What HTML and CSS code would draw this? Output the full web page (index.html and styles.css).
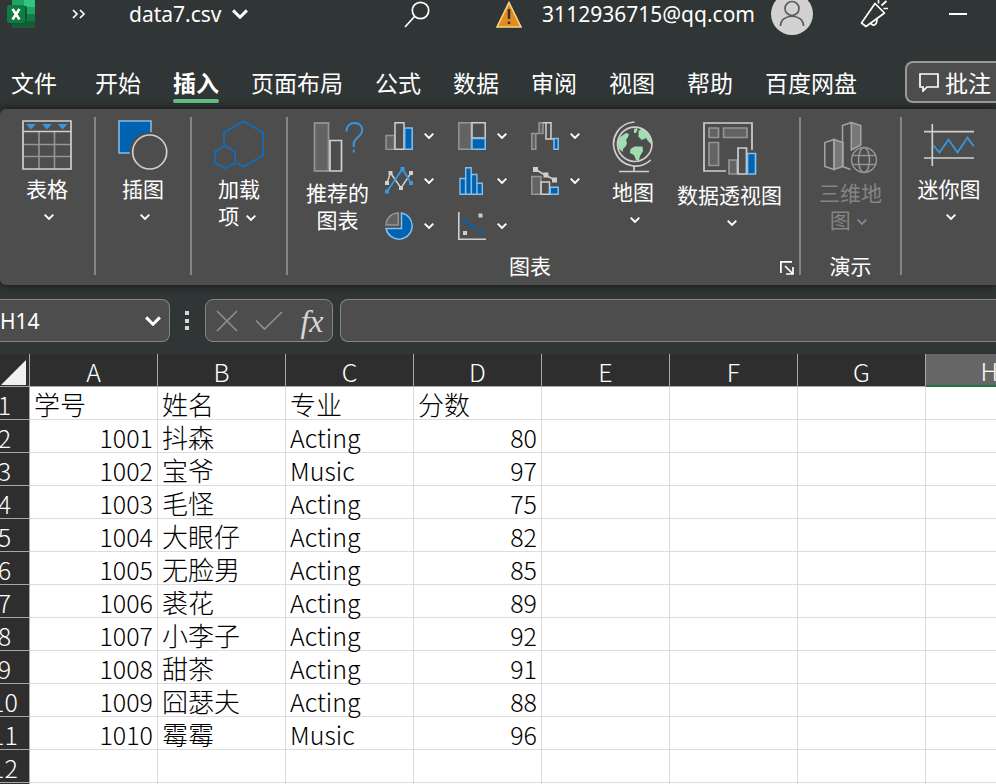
FILE: index.html
```
<!DOCTYPE html>
<html lang="zh-CN">
<head>
    <meta charset="UTF-8">
    <meta name="viewport" content="width=device-width, initial-scale=1.0">
    <title>data7.csv - Excel</title>
    <link rel="stylesheet" href="styles.css">
</head>
<body>
    <svg class="defs" aria-hidden="true">
        <symbol id="chevron" viewBox="0 0 10 6"><path d="M.7.7 5 5 9.3.7" fill="none" stroke="currentColor" stroke-width="1.9"/></symbol>
    </svg>

    <header class="titlebar">
        <svg class="logo" width="28" height="28" viewBox="0 0 28 28">
            <path fill="#21a366" d="M5 0h12v14H5z"/>
            <path fill="#33c481" d="M17 0h11v7H17z"/>
            <path fill="#21a366" d="M17 7h11v7H17z"/>
            <path fill="#107c41" d="M17 14h11v7H17z"/>
            <path fill="#185c37" d="M5 14h12v7h11v6q0 1-1 1H6q-1 0-1-1z"/>
            <rect x="2" y="6" width="18" height="18" rx="2" fill="#0b5a2f"/>
            <rect x="0" y="5" width="18" height="18" rx="2" fill="#107c41"/>
            <path d="M5.500 9l7 10.500M12.500 9l-7 10.500" stroke="#fff" stroke-width="2.600"/>
        </svg>
        <button class="more" aria-label="更多命令">
            <svg width="14" height="10" viewBox="0 0 14 10"><path d="M1 1l4 4-4 4M8 1l4 4-4 4" fill="none" stroke="#fff" stroke-width="1.7"/></svg>
        </button>
        <button class="file-name">data7.csv <svg width="16" height="10"><use href="#chevron"/></svg></button>
        <button class="search" aria-label="搜索">
            <svg width="26" height="27" viewBox="0 0 26 27" fill="none" stroke="#fff" stroke-width="1.7"><circle cx="16.500" cy="9.500" r="8.200"/><path d="M10.500 15.500 1 26"/></svg>
        </button>
        <button class="account">
            <svg width="26" height="27" viewBox="0 0 26 27"><path d="M13 1.500 25 26H1z" fill="#e08c1e" stroke="#f8d48a" stroke-width="1.600"/><path d="M13 8v10M13 20.500v2.500" stroke="#333" stroke-width="2.500"/></svg>
            <span>3112936715@qq.com</span>
            <svg class="avatar" width="42" height="42" viewBox="0 0 42 42"><circle cx="21" cy="21" r="21" fill="#d2d2d2"/><g fill="none" stroke="#5c5c5c" stroke-width="1.700"><circle cx="21" cy="15.500" r="7"/><path d="M9.500 33c0-13 23-13 23 0"/></g></svg>
        </button>
        <button class="feedback" aria-label="反馈">
            <svg width="28" height="28" viewBox="0 0 28 28" fill="none" stroke="#fff" stroke-width="1.700" stroke-linejoin="round"><path d="M15 3.500 24.500 13 6 26.500 1.500 23z"/><path d="M11 23c1 3.500 6 3 6-4"/><path d="M18.500 3.500V0M21.500 5.500 26.500 1M23.500 8.500H28"/></svg>
        </button>
        <button class="minimize" aria-label="最小化">
            <svg width="18" height="2"><path d="M0 1h18" stroke="#fff" stroke-width="2"/></svg>
        </button>
    </header>

    <nav class="tabs">
        <button class="tab tab-file">文件</button>
        <button class="tab">开始</button>
        <button class="tab active">插入</button>
        <button class="tab">页面布局</button>
        <button class="tab">公式</button>
        <button class="tab">数据</button>
        <button class="tab">审阅</button>
        <button class="tab">视图</button>
        <button class="tab">帮助</button>
        <button class="tab">百度网盘</button>
        <button class="comments">
            <svg width="20" height="19" viewBox="0 0 20 19"><path d="M1 1h18v13H8l-4 4v-4H1z" fill="none" stroke="#fff" stroke-width="1.700"/></svg>
            批注
        </button>
    </nav>

    <section class="ribbon">
        <div class="group">
            <button class="big">
                <svg width="50" height="50" viewBox="0 0 50 50" fill="none">
                    <path d="M17 12v37M32.500 12v37M1 24.500h48M1 36.500h48" stroke="#979593" stroke-width="1.600"/>
                    <path d="M1 1h48v48H1zM1 11.500h48" stroke="#d0cfce" stroke-width="1.700"/>
                    <path d="M4 4h10L9 9.500zM20 4h10l-5 5.500zM35.500 4h10l-5 5.500z" fill="#3a96dd"/>
                </svg>
                <span>表格</span>
                <svg class="drop"><use href="#chevron"/></svg>
            </button>
        </div>

        <div class="group">
            <button class="big">
                <svg width="50" height="50" viewBox="0 0 50 50">
                    <rect x="1" y="1" width="32" height="32" fill="#0063b1" stroke="#83beec" stroke-width="1.500"/>
                    <circle cx="31.700" cy="32" r="20" fill="#4d4d4d"/>
                    <circle cx="31.700" cy="32" r="17" fill="none" stroke="#d0cfce" stroke-width="1.700"/>
                </svg>
                <span>插图</span>
                <svg class="drop"><use href="#chevron"/></svg>
            </button>
        </div>

        <div class="group">
            <button class="big">
                <svg width="50" height="50" viewBox="0 0 50 50" fill="none" stroke="#106ebe" stroke-width="1.700">
                    <path d="M10 23.500v-11L29.300 1.300 49 12.500v23L29.300 46.700 23 43"/>
                    <path d="M11 25.700l10.300 6v11L11 48.300.900 42.700v-11z"/>
                </svg>
                <span>加载<br>项 <svg class="drop inline"><use href="#chevron"/></svg></span>
            </button>
        </div>

        <div class="group charts">
            <div class="chart-tools">
                <button class="big">
                    <svg width="50" height="54" viewBox="0 -1 50 54" fill="none">
                        <rect x="1.500" y="2" width="14" height="48" fill="#636363" stroke="#979593" stroke-width="1.700"/>
                        <path d="M17 19.500h11.500V50H17z" stroke="#d0cfce" stroke-width="1.700"/>
                        <path d="M33.500 10.500C33.500 5 37 2 41.500 2s7.700 3 7.700 7.500c0 6-8.500 7.500-8.500 13.500v3M40.700 28.500v3" stroke="#3a96dd" stroke-width="2"/>
                    </svg>
                    <span>推荐的<br>图表</span>
                </button>

                <div class="chart-grid">
                    <button class="chart" aria-label="柱形图">
                        <svg width="28" height="28" fill="none" stroke-width="1.500">
                            <path d="M1 13.500h8.500v14H1z" fill="#636363" stroke="#979593"/>
                            <path d="M10 .800h9v26.500h-9z" stroke="#d0cfce"/>
                            <path d="M19.700 6h7.500v21.300h-7.500z" fill="#0063b1" stroke="#83beec"/>
                        </svg>
                        <svg class="drop"><use href="#chevron"/></svg>
                    </button>
                    <button class="chart" aria-label="层次结构图">
                        <svg width="28" height="28" fill="none" stroke-width="1.500">
                            <path d="M.800.800h12.500v26.500H.800z" fill="#636363" stroke="#979593"/>
                            <path d="M14 .800h13.200V16H14z" stroke="#d0cfce"/>
                            <path d="M14 16.500h13.200v10.800H14z" fill="#0063b1" stroke="#83beec"/>
                        </svg>
                        <svg class="drop"><use href="#chevron"/></svg>
                    </button>
                    <button class="chart" aria-label="瀑布图">
                        <svg width="28" height="28" fill="none" stroke-width="1.500">
                            <path d="M.800 11.500h4v15.700h-4zM8 .800h4v10.700H8zM4 11.500h4" fill="#636363" stroke="#979593"/>
                            <path d="M12 .800h8V17h-5V.800M20 17h4" stroke="#d0cfce"/>
                            <path d="M23 16.500h4.200v10.800H23z" fill="#0063b1" stroke="#83beec"/>
                        </svg>
                        <svg class="drop"><use href="#chevron"/></svg>
                    </button>
                    <button class="chart" aria-label="折线图">
                        <svg width="28" height="28" fill="none" stroke-width="1.500">
                            <path d="M2 16 5.500 6 16 21 26 6" stroke="#d0cfce"/>
                            <path d="M0 14h4v4H0zM3.500 4h4v4h-4zM14 19h4v4h-4zM24 4h4v4h-4z" fill="#d0cfce"/>
                            <path d="M2 24.500 17.500 2 26 16" stroke="#3a96dd" stroke-width="1.800"/>
                            <path d="M0 22.500h4v4H0zM15.500 0h4v4h-4zM24 14h4v4h-4z" fill="#3a96dd"/>
                        </svg>
                        <svg class="drop"><use href="#chevron"/></svg>
                    </button>
                    <button class="chart" aria-label="统计图">
                        <svg width="28" height="28" fill="#0063b1" stroke="#83beec" stroke-width="1.400">
                            <path d="M2 11.500h5.500v15.700H2zM7.700.800h5.500v26.400H7.700zM13.400 7.500h5.500v19.700h-5.500zM19 16.300h5.300v10.900H19z"/>
                        </svg>
                        <svg class="drop"><use href="#chevron"/></svg>
                    </button>
                    <button class="chart" aria-label="组合图">
                        <svg width="28" height="28" fill="none" stroke-width="1.500">
                            <path d="M.800 9.500H10v17.700H.800z" fill="#636363" stroke="#979593"/>
                            <path d="M10 15h8.500v12.200H10z" stroke="#d0cfce"/>
                            <path d="M19.200 20.300h8v7h-8z" fill="#0063b1" stroke="#83beec"/>
                            <path d="M4.500 2.500 15 8.500l9 4.500" stroke="#d0cfce"/>
                            <path d="M2 0h5v5H2zM12.500 5.500h5v5h-5zM21 10.500h5v5h-5z" fill="#d0cfce"/>
                        </svg>
                        <svg class="drop"><use href="#chevron"/></svg>
                    </button>
                    <button class="chart" aria-label="饼图">
                        <svg width="28" height="28" stroke-width="1.500">
                            <path d="M13.300 1v12H1C1.400 6 6.500 1 13.300 1z" fill="#636363" stroke="#979593"/>
                            <path d="M16.500 1A13.200 13.200 0 1 1 1 16.500h15.500z" fill="#0063b1" stroke="#83beec"/>
                        </svg>
                        <svg class="drop"><use href="#chevron"/></svg>
                    </button>
                    <button class="chart" aria-label="散点图">
                        <svg width="28" height="28">
                            <path d="M.800 0v27.200H28" fill="none" stroke="#d0cfce" stroke-width="1.600"/>
                            <path d="M20.500 1.500h4v4h-4zM5 19h4v4H5z" fill="#d0cfce"/>
                            <path d="M5 7h4v4H5zM12 12h4v4h-4zM20.500 17h4v4h-4z" fill="#0063b1"/>
                        </svg>
                        <svg class="drop"><use href="#chevron"/></svg>
                    </button>
                </div>

                <button class="big map">
                    <svg width="42" height="53" viewBox="0 -1 42 53" fill="none">
                        <path d="M11 14l3-2 3 1-1 3-2 3 1 3-1 3-3 3v3l-4-3-1.500-5L7 17zM22 8l3-1 .500 2-1.500 3h-2zM26.500 10l4-3 5 4 3.500 7v5l-3-3-2-3-4 2-3.500-3zM18.500 28l4-2.500h8L31 30l-3 5-1 4h-3l-2-5-4-2z" fill="#a0ddb0"/>
                        <circle cx="22.700" cy="23.300" r="17.200" stroke="#d0cfce" stroke-width="1.700"/>
                        <path d="M22.500 1a22 22 0 1 0 16.200 38M22 45.500v5M7 50.500h30" stroke="#d0cfce" stroke-width="1.700"/>
                    </svg>
                    <span>地图</span>
                    <svg class="drop"><use href="#chevron"/></svg>
                </button>

                <button class="big pivot">
                    <svg width="54" height="56" viewBox="0 -2 54 56" fill="none" stroke-width="1.700">
                        <path d="M23 49H1V1h48v27" stroke="#d0cfce"/>
                        <path d="M6 6h9.500v9.500H6zM20.500 6H44v9.500H20.500zM6 20.500h9.500v23H6zM26 38h8v14h-8z" fill="#636363" stroke="#979593"/>
                        <path d="M35 26h8.500v26H35z" stroke="#d0cfce"/>
                        <path d="M44.500 31.500h8V52h-8z" fill="#0063b1" stroke="#83beec"/>
                    </svg>
                    <span>数据透视图</span>
                    <svg class="drop"><use href="#chevron"/></svg>
                </button>
            </div>
            <div class="group-label">
                <span>图表</span>
                <button class="launcher" aria-label="图表选项">
                    <svg width="14" height="14" fill="none" stroke="#fff" stroke-width="1.700"><path d="M.900 12V.900H12M5 5l7.500 7.500M13 6v7H6"/></svg>
                </button>
            </div>
        </div>

        <div class="group demo">
            <button class="big" disabled>
                <svg width="54" height="54" viewBox="0 -1 54 54" fill="none" stroke="#a5a5a5" stroke-width="1.500">
                    <path d="M10 18.500l9 3v24l-9 3zM27.300 1.500l9.500 3v19.500l-9.500 5z" fill="#777"/>
                    <path d="M10 18.500l-9.200 3v24l9.200 3zM27.300 1.500l-8.800 3v41l8 3"/>
                    <g stroke="#979593"><circle cx="40" cy="39" r="12.500"/><ellipse cx="40" cy="39" rx="5.500" ry="12.500"/><path d="M29 34.500h22M29 43.500h22"/></g>
                </svg>
                <span>三维地<br>图 <svg class="drop inline"><use href="#chevron"/></svg></span>
            </button>
            <div class="group-label"><span>演示</span></div>
        </div>

        <div class="group">
            <button class="big">
                <svg width="50" height="50" viewBox="0 -4 50 50" fill="none">
                    <path d="M8.300 0v42M0 7.700h50M0 34h50" stroke="#d0cfce" stroke-width="1.700"/>
                    <path d="M9 21l6.500 7.500 9-13 9 13 10-15 6.300 9" stroke="#3a96dd" stroke-width="1.800"/>
                </svg>
                <span>迷你图</span>
                <svg class="drop"><use href="#chevron"/></svg>
            </button>
        </div>
    </section>

    <div class="formula-bar">
        <div class="name-box">
            <input type="text" value="H14" aria-label="名称框">
            <button aria-label="选择名称"><svg width="16" height="10"><use href="#chevron"/></svg></button>
        </div>
        <svg class="grip" width="4" height="20" fill="#d8d8d8"><path d="M0 0h4v4H0zM0 8h4v4H0zM0 15h4v4H0z"/></svg>
        <div class="edit-buttons">
            <button aria-label="取消"><svg width="22" height="22"><path d="M1 1l20 20M21 1 1 21" stroke="#8e8e8e" stroke-width="1.700"/></svg></button>
            <button aria-label="输入"><svg width="28" height="20"><path d="M1 9.500 9.500 18 27 1" fill="none" stroke="#8e8e8e" stroke-width="1.700"/></svg></button>
            <button class="fx" aria-label="插入函数">fx</button>
        </div>
        <input class="formula" type="text" aria-label="编辑栏">
    </div>

    <main class="sheet">
        <table>
            <colgroup><col class="index"><col span="8"></colgroup>
            <thead>
                <tr><th class="corner"><svg width="25" height="25"><path d="M25 0v25H0z" fill="#f0f0f0"/></svg></th><th>A</th><th>B</th><th>C</th><th>D</th><th>E</th><th>F</th><th>G</th><th class="selected">H</th></tr>
            </thead>
            <tbody>
                <tr><th>1</th><td class="cn">学号</td><td class="cn">姓名</td><td class="cn">专业</td><td class="cn">分数</td><td></td><td></td><td></td><td></td></tr>
                <tr><th>2</th><td class="num">1001</td><td class="cn">抖森</td><td>Acting</td><td class="num">80</td><td></td><td></td><td></td><td></td></tr>
                <tr><th>3</th><td class="num">1002</td><td class="cn">宝爷</td><td>Music</td><td class="num">97</td><td></td><td></td><td></td><td></td></tr>
                <tr><th>4</th><td class="num">1003</td><td class="cn">毛怪</td><td>Acting</td><td class="num">75</td><td></td><td></td><td></td><td></td></tr>
                <tr><th>5</th><td class="num">1004</td><td class="cn">大眼仔</td><td>Acting</td><td class="num">82</td><td></td><td></td><td></td><td></td></tr>
                <tr><th>6</th><td class="num">1005</td><td class="cn">无脸男</td><td>Acting</td><td class="num">85</td><td></td><td></td><td></td><td></td></tr>
                <tr><th>7</th><td class="num">1006</td><td class="cn">裘花</td><td>Acting</td><td class="num">89</td><td></td><td></td><td></td><td></td></tr>
                <tr><th>8</th><td class="num">1007</td><td class="cn">小李子</td><td>Acting</td><td class="num">92</td><td></td><td></td><td></td><td></td></tr>
                <tr><th>9</th><td class="num">1008</td><td class="cn">甜茶</td><td>Acting</td><td class="num">91</td><td></td><td></td><td></td><td></td></tr>
                <tr><th>10</th><td class="num">1009</td><td class="cn">囧瑟夫</td><td>Acting</td><td class="num">88</td><td></td><td></td><td></td><td></td></tr>
                <tr><th>11</th><td class="num">1010</td><td class="cn">霉霉</td><td>Music</td><td class="num">96</td><td></td><td></td><td></td><td></td></tr>
                <tr><th>12</th><td></td><td></td><td></td><td></td><td></td><td></td><td></td><td></td></tr>
                <tr><th>13</th><td></td><td></td><td></td><td></td><td></td><td></td><td></td><td></td></tr>
            </tbody>
        </table>
    </main>
</body>
</html>
```
FILE: styles.css
```
* { box-sizing: border-box; }
html { height: 100%; overflow: hidden; }
body { margin: 0; height: 100%; overflow: hidden; background: #303535; color: #fff; font-family: "Noto Sans", "Noto Sans CJK SC", sans-serif; }
button { margin: 0; padding: 0; border: none; background: none; color: inherit; font: inherit; white-space: nowrap; }
input { margin: 0; padding: 0; border: none; background: none; color: inherit; font: inherit; outline: none; min-width: 0; }
svg { display: block; flex: none; }
.defs { position: absolute; width: 0; height: 0; }
.drop { width: 10px; height: 6px; }

/* Title bar, its top is cut off by the window edge */
.titlebar { display: flex; align-items: center; height: 42px; margin-top: -7px; padding: 0 29px 0 7px; font-size: 21px; }
.titlebar button { display: flex; align-items: center; }
.more { margin-left: 37px; }
.titlebar .file-name { gap: 10px; margin-left: 43px; }
.search { margin-left: auto; }
.titlebar .account { gap: 16px; margin-left: 66px; }
.account span { margin-left: 4px; }
.feedback { margin-left: 47px; }
.minimize { margin-left: 61px; }

/* Ribbon tabs */
.tabs { display: flex; height: 42px; margin-top: 26px; font-size: 23px; font-family: "Noto Sans CJK SC", sans-serif; }
.tab { position: relative; padding: 0 16px; line-height: 40px; }
.tab-file { padding-left: 11px; padding-right: 22px; }
.tab.active { font-weight: bold; }
.tab.active::after { content: ""; position: absolute; left: 16px; right: 16px; bottom: 0; height: 4px; border-radius: 2px; background: #60bd82; }
.comments { display: flex; align-items: center; gap: 6px; margin-left: auto; padding: 0 5px 0 12px; border: 2px solid #999; border-right: none; border-radius: 8px 0 0 8px; background: #4d4d4d; line-height: 36px; }

/* Ribbon */
.ribbon { display: flex; margin-top: 6px; padding: 8px 0 10px; border-radius: 6px 0 0 6px; background: #4d4d4d; box-shadow: 0 0 8px rgba(0, 0, 0, 0.7); font-size: 21px; font-family: "Noto Sans CJK SC", sans-serif; }
.group { display: flex; flex-direction: column; align-items: center; min-width: 96px; padding-top: 3px; border-right: 2px solid #858585; }
.group:last-child { min-width: 94px; border-right: none; }
.big { display: flex; flex-direction: column; align-items: center; line-height: 27px; }
.big > span { margin-top: 5px; }
.big > .drop { margin: 12px 0 0 4px; }
.big:disabled { color: #858585; }
.drop.inline { display: inline-block; margin: 0 4px 0 2px; vertical-align: middle; }
.charts { align-items: stretch; flex: 1; }
.chart-tools { display: flex; align-items: flex-start; padding-left: 18px; }
.chart-grid { display: grid; grid-template-columns: repeat(3, 49px); gap: 17px 24px; padding-top: 2px; margin-left: 16px; }
.chart { display: flex; align-items: center; gap: 11px; }
.map { margin-left: 32px; }
.pivot { margin-left: 23px; }
.group-label { display: flex; align-items: flex-end; margin-top: auto; padding-top: 15px; line-height: 20px; text-align: center; }
.group-label span { flex: 1; }
.charts .group-label span { padding-right: 8px; }
.launcher { margin-right: 5px; }
.demo { min-width: 101px; }

/* Formula bar */
.formula-bar { display: flex; align-items: center; height: 69px; padding: 14px 0 12px; font-size: 21px; }
.name-box, .edit-buttons, .formula { height: 43px; border: 1px solid #868686; background: #4d4d4d; }
.name-box { display: flex; align-items: center; width: 170px; padding-right: 8px; border-left: none; border-radius: 0 8px 8px 0; }
.name-box input { flex: 1; }
.grip { margin: 0 16px 0 15px; }
.edit-buttons { display: flex; align-items: center; gap: 17px; width: 128px; padding: 0 8px 0 10px; border-radius: 8px; }
.fx { flex: 1; color: #d8d8d8; font: italic 32px/36px "Liberation Serif", serif; }
.formula { flex: 1; margin-left: 7px; border-right: none; border-radius: 8px 0 0 8px; }

/* Worksheet grid, scrolled a little past the row headers */
.sheet { margin-left: -20px; overflow: hidden; }
table { width: 1074px; table-layout: fixed; border-collapse: separate; border-spacing: 0; background: #fff; color: #000; font-family: "Noto Sans CJK SC", sans-serif; font-size: 25px; font-weight: 300; line-height: 30px; }
col { width: 128px; }
col.index { width: 50px; }
th, td { height: 33px; padding: 2px 4px 0; border-right: 1px solid #dcdcdc; border-bottom: 1px solid #dcdcdc; text-align: left; white-space: nowrap; }
th { padding: 2px 0 0; background: #2e2e2e; border-color: #a8a8a8; color: #fff; font-weight: 300; text-align: center; }
th.corner svg { margin: 2px 3px 0 auto; }
th.selected { background: #666; border-bottom: 2px solid #217346; line-height: 29px; }
.cn { font-size: 26px; }
.num { text-align: right; }
```
